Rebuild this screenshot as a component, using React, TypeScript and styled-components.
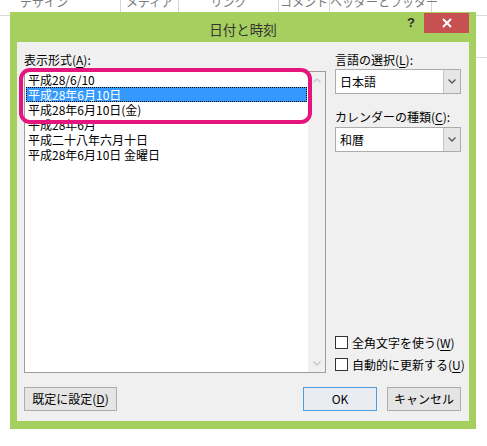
import React from "react";
import styled, { createGlobalStyle } from "styled-components";

const Global = createGlobalStyle`
  html, body { margin: 0; padding: 0; background: #ffffff; }
  body { font-family: "Noto Sans CJK JP", "Noto Sans", sans-serif; font-size: 12px; color: #000; }
`;

const Page = styled.div`
  width: 487px;
  height: 446px;
  overflow: hidden;
  position: relative;
  background:
    linear-gradient(#dadada, #dadada) no-repeat 0 15px / 100% 1px,
    linear-gradient(#dadada, #dadada) no-repeat 476px 57px / 11px 1px,
    #ffffff;
`;

const Ribbon = styled.div`
  display: flex;
  height: 12px;
  overflow: hidden;
  background: #ffffff;
`;

const Tab = styled.div<{ $w: number; $first?: boolean }>`
  flex: none;
  width: ${(p) => p.$w}px;
  margin-left: ${(p) => (p.$first ? "-32px" : "0")};
  border-right: 1px solid #d6d6d6;
  text-align: center;
  color: #7a7a7a;
  font-size: 12px;
  line-height: 12px;
  height: 12px;
  box-sizing: border-box;
  span { display: block; margin-top: -4px; white-space: nowrap; }
`;

const Window = styled.div`
  margin-left: 10px;
  width: 466px;
  height: 417px;
  box-sizing: border-box;
  background: #a5cf5e;
  padding: 0 7px 8px 7px;
  display: flex;
  flex-direction: column;
`;

const TitleBar = styled.div`
  height: 30px;
  display: grid;
  grid-template-columns: 1fr auto 1fr;
  align-items: start;
`;

const Title = styled.div`
  grid-column: 2;
  font-size: 13.5px;
  line-height: 20px;
  padding-top: 7px;
  color: #333333;
`;

const Controls = styled.div`
  grid-column: 3;
  justify-self: end;
  display: flex;
  align-items: flex-start;
`;

const Help = styled.div`
  font-family: "Liberation Sans", Arial, sans-serif;
  font-weight: bold;
  font-size: 13px;
  line-height: 14px;
  color: #2a2a2a;
  margin-top: 4px;
  margin-right: 9px;
`;

const Close = styled.div`
  width: 45px;
  height: 20px;
  margin-top: 1px;
  background: #c75050;
  display: flex;
  align-items: center;
  justify-content: center;
`;

const Content = styled.div`
  flex: 1;
  background: #f0f0f0;
  padding: 10px 8px 0 7px;
  display: grid;
  grid-template-columns: 302px 126px;
  grid-template-rows: 321px auto;
  column-gap: 9px;
`;

const Column = styled.div`
  display: flex;
  flex-direction: column;
`;

const Label = styled.div<{ $mb: number; $mt?: number }>`
  line-height: 16px;
  height: 16px;
  white-space: nowrap;
  margin-bottom: ${(p) => p.$mb}px;
  margin-top: ${(p) => p.$mt ?? 0}px;
  u { text-decoration: underline; text-underline-offset: 2px; }
`;

const ListWrap = styled.div`
  position: relative;
  height: 302px;
`;

const ListBox = styled.div`
  height: 100%;
  box-sizing: border-box;
  border: 1px solid #9d9d9d;
  background: #ffffff;
  display: flex;
`;

const Items = styled.div`
  flex: 1;
  padding: 0 1px;
`;

const Item = styled.div<{ $sel?: boolean }>`
  height: 15px;
  line-height: 15px;
  padding-left: 2px;
  white-space: nowrap;
  background: ${(p) => (p.$sel ? "#3399ff" : "transparent")};
  color: ${(p) => (p.$sel ? "#ffffff" : "#000000")};
  outline: ${(p) => (p.$sel ? "1px dotted #000" : "none")};
  outline-offset: -1px;
`;

const Scroll = styled.div`
  width: 17px;
  background: #f0f0f0;
  display: flex;
  flex-direction: column;
  justify-content: space-between;
`;

const ScrollBtn = styled.div`
  height: 17px;
  display: flex;
  align-items: center;
  justify-content: center;
`;

const Mark = styled.div`
  position: absolute;
  left: -5px;
  top: -3px;
  width: 293px;
  height: 56px;
  box-sizing: border-box;
  border: 4px solid #e4157c;
  border-radius: 11px;
  pointer-events: none;
`;

const Select = styled.div`
  height: 25px;
  box-sizing: border-box;
  border: 1px solid #acacac;
  background: #ffffff;
  display: flex;
  align-items: stretch;
`;

const SelectText = styled.div`
  flex: 1;
  padding-left: 4px;
  line-height: 23px;
`;

const SelectBtn = styled.div`
  width: 16px;
  background: #e6e6e6;
  border-left: 1px solid #c4c4c4;
  display: flex;
  align-items: center;
  justify-content: center;
`;

const Checks = styled.div`
  margin-top: auto;
  display: flex;
  flex-direction: column;
  gap: 5px;
`;

const CheckRow = styled.div`
  height: 17px;
  display: flex;
  align-items: center;
  white-space: nowrap;
  u { text-decoration: underline; text-underline-offset: 2px; }
`;

const Box = styled.span`
  width: 13px;
  height: 13px;
  box-sizing: border-box;
  border: 1px solid #333333;
  background: #ffffff;
  margin-right: 4px;
  flex: none;
`;

const ButtonRow = styled.div`
  grid-column: 1 / span 2;
  margin-top: 14px;
  display: flex;
  justify-content: space-between;
  align-items: flex-start;
`;

const RightButtons = styled.div`
  display: flex;
  gap: 10px;
`;

const Button = styled.div<{ $w: number; $default?: boolean }>`
  width: ${(p) => p.$w}px;
  height: 24px;
  box-sizing: border-box;
  border: 1px solid ${(p) => (p.$default ? "#4d9ee0" : "#acacac")};
  background: ${(p) => (p.$default ? "#e9edf1" : "#e5e5e5")};
  display: flex;
  align-items: center;
  justify-content: center;
  line-height: 22px;
  white-space: nowrap;
  u { text-decoration: underline; text-underline-offset: 2px; }
`;

const Chevron = ({ up, color }: { up?: boolean; color: string }) => (
  <svg width="8" height="5" viewBox="0 0 8 5">
    <path
      d={up ? "M0.5 4.5 L4 1 L7.5 4.5" : "M0.5 0.5 L4 4 L7.5 0.5"}
      fill="none"
      stroke={color}
      strokeWidth="1.3"
    />
  </svg>
);

const items = [
  "平成28/6/10",
  "平成28年6月10日",
  "平成28年6月10日(金)",
  "平成28年6月",
  "平成二十八年六月十日",
  "平成28年6月10日 金曜日",
];

export default function App() {
  return (
    <>
      <Global />
      <Page>
        <Ribbon>
          <Tab $w={153} $first><span>デザイン</span></Tab>
          <Tab $w={58}><span>メディア</span></Tab>
          <Tab $w={100}><span>リンク</span></Tab>
          <Tab $w={51}><span>コメント</span></Tab>
          <Tab $w={102}><span>ヘッダーとフッター</span></Tab>
        </Ribbon>
        <Window>
          <TitleBar>
            <Title>日付と時刻</Title>
            <Controls>
              <Help>?</Help>
              <Close>
                <svg width="10" height="10" viewBox="0 0 10 10">
                  <path d="M1 1 L9 9 M9 1 L1 9" stroke="#ffffff" strokeWidth="2" />
                </svg>
              </Close>
            </Controls>
          </TitleBar>
          <Content>
            <Column>
              <Label $mb={3}>表示形式(<u>A</u>):</Label>
              <ListWrap>
                <ListBox>
                  <Items>
                    {items.map((t, i) => (
                      <Item key={t} $sel={i === 1}>{t}</Item>
                    ))}
                  </Items>
                  <Scroll>
                    <ScrollBtn><Chevron up color="#c6c6c6" /></ScrollBtn>
                    <ScrollBtn><Chevron color="#c6c6c6" /></ScrollBtn>
                  </Scroll>
                </ListBox>
                <Mark />
              </ListWrap>
            </Column>
            <Column>
              <Label $mb={1}>言語の選択(<u>L</u>):</Label>
              <Select>
                <SelectText>日本語</SelectText>
                <SelectBtn><Chevron color="#555555" /></SelectBtn>
              </Select>
              <Label $mt={15} $mb={2}>カレンダーの種類(<u>C</u>):</Label>
              <Select>
                <SelectText>和暦</SelectText>
                <SelectBtn><Chevron color="#555555" /></SelectBtn>
              </Select>
              <Checks>
                <CheckRow><Box />全角文字を使う(<u>W</u>)</CheckRow>
                <CheckRow><Box />自動的に更新する(<u>U</u>)</CheckRow>
              </Checks>
            </Column>
            <ButtonRow>
              <Button $w={93}>既定に設定(<u>D</u>)</Button>
              <RightButtons>
                <Button $w={74} $default>OK</Button>
                <Button $w={74}>キャンセル</Button>
              </RightButtons>
            </ButtonRow>
          </Content>
        </Window>
      </Page>
    </>
  );
}
